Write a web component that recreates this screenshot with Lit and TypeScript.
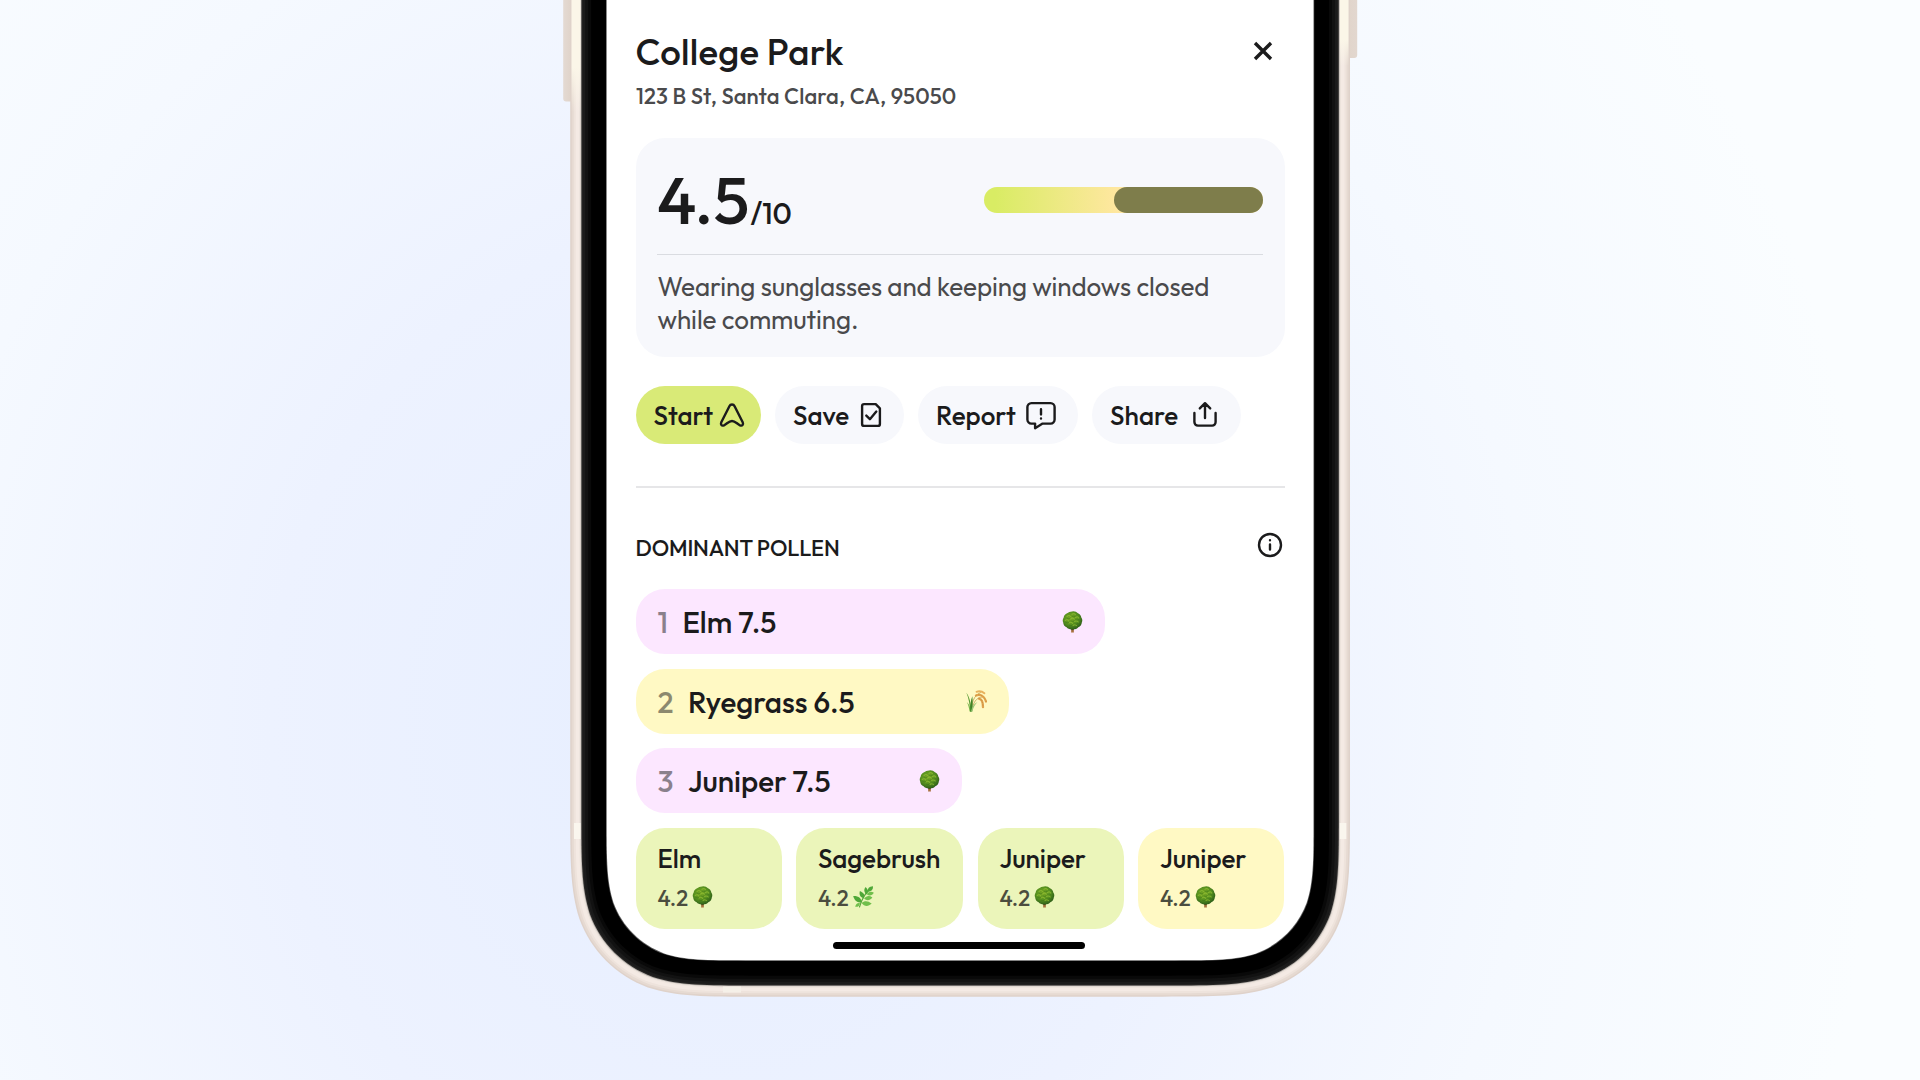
import { customElement, property } from 'lit/decorators.js';
import { css, html, LitElement, svg } from 'lit';

interface PollenItem {
  name: string;
  value: string;
  kind: 'tree' | 'grass' | 'herb';
  tone: 'pink' | 'yellow' | 'green';
  width: number;
}

const RANKED: PollenItem[] = [
  { name: 'Elm', value: '7.5', kind: 'tree', tone: 'pink', width: 469 },
  { name: 'Ryegrass', value: '6.5', kind: 'grass', tone: 'yellow', width: 373.3 },
  { name: 'Juniper', value: '7.5', kind: 'tree', tone: 'pink', width: 326.3 },
];

const OTHERS: PollenItem[] = [
  { name: 'Elm', value: '4.2', kind: 'tree', tone: 'green', width: 146 },
  { name: 'Sagebrush', value: '4.2', kind: 'herb', tone: 'green', width: 167 },
  { name: 'Juniper', value: '4.2', kind: 'tree', tone: 'green', width: 146 },
  { name: 'Juniper', value: '4.2', kind: 'tree', tone: 'yellow', width: 146 },
];

const ACTIONS = ['Start', 'Save', 'Report', 'Share'];

// Shells of the phone body from the outside in: [inset, colour]
const SHELLS: [number, string][] = [
  [0, '#dfd2ca'],
  [1.5, '#e6dad2'],
  [3.5, '#eee3dc'],
  [5.5, '#f4eae4'],
  [9, '#ece3dc'],
  [10.4, '#b9b3ae'],
  [11.2, '#262524'],
  [12.5, '#1b1b1b'],
  [15, '#121212'],
  [18, '#090909'],
  [21, '#000000'],
  [35.8, '#5a5a5a'],
  [36.5, '#ffffff'],
];

function shellPath(inset: number): string {
  const l = 570.2 + inset;
  const r = 1350 - inset;
  const b = 996.7 - inset;
  const q = 123 - inset * 0.88;
  // continuous corner, as fractions of the radius
  return `M${l} -10V${b - 1.528 * q}
    C${l} ${b - 1.088 * q} ${l} ${b - 0.868 * q} ${l + 0.075 * q} ${b - 0.631 * q}
    C${l + 0.169 * q} ${b - 0.373 * q} ${l + 0.373 * q} ${b - 0.169 * q} ${l + 0.631 * q} ${b - 0.075 * q}
    C${l + 0.868 * q} ${b} ${l + 1.088 * q} ${b} ${l + 1.528 * q} ${b}
    H${r - 1.528 * q}
    C${r - 1.088 * q} ${b} ${r - 0.868 * q} ${b} ${r - 0.631 * q} ${b - 0.075 * q}
    C${r - 0.373 * q} ${b - 0.169 * q} ${r - 0.169 * q} ${b - 0.373 * q} ${r - 0.075 * q} ${b - 0.631 * q}
    C${r} ${b - 0.868 * q} ${r} ${b - 1.088 * q} ${r} ${b - 1.528 * q}
    V-10Z`;
}

@customElement('pollen-glyph')
export class PollenGlyph extends LitElement {
  static styles = css`
    :host {
      display: flex;
    }
    svg {
      width: 21px;
      height: 22px;
    }
  `;

  @property() kind = 'tree';

  renderTree() {
    return svg`
      <defs>
        <radialGradient id="leafs" cx="0.42" cy="0.38" r="0.62">
          <stop offset="0" stop-color="#78a824" />
          <stop offset="0.6" stop-color="#56901f" />
          <stop offset="1" stop-color="#2f6119" />
        </radialGradient>
      </defs>
      <path d="M9.3 17h2.4l.2 4.6H9.1z" fill="#a8733f" />
      <path d="M9.3 17h2.4v2.2H9.3z" fill="#5a4420" />
      <path
        d="M10.5.4c2.4-.2 4.2.8 5.4 1.900 2 .8 3.200 2.400 3.400 4.300 1.200 1.500 1.300 3.500.5 5-.1 2.300-1.500 3.900-3.500 4.600-1.200 1.600-3.400 2.300-5.800 2.200-2.600.2-4.700-.5-5.900-2.100-2-.7-3.300-2.400-3.400-4.700-.8-1.700-.5-3.600.5-5.100.2-1.900 1.500-3.400 3.400-4.200C6.300 1.100 8.300.3 10.500.4z"
        fill="url(#leafs)"
      />
      <path
        d="M5 5.500q2-2 3.500 0M10 3.300q2-1.500 3.500.4M13.500 6.500q2-1.500 3.400.6M8.500 8q2-1.800 3.800.1M3.200 9.500q1.800-1.700 3.500.3M12.500 10.500q2-1.500 3.800.5M7 12q2-1.700 3.500.3M11 14.500q2-1.500 3.600.2"
        fill="none" stroke="#93bf35" stroke-width="1.1" stroke-linecap="round" opacity="0.7"
      />
      <path
        d="M5.200 7.400q1.800 1 3.200-.2M10.300 5.500q1.500.8 3-.1M9 10q1.500 1 3.200 0M13.500 8.900q1.500.7 3-.1M3.800 11.600q1.500.9 3-.1M7.400 14.400q1.500.8 3-.2M12.800 12.900q1.500.6 3-.2"
        fill="none" stroke="#2f6315" stroke-width="0.7" stroke-linecap="round" opacity="0.5"
      />`;
  }

  renderGrass() {
    return svg`
      <g fill="none" stroke-linecap="round">
        <path d="M5 21C5.500 14 7.500 5 14.500 2.600" stroke="#b7a24c" stroke-width="0.8" />
        <path d="M6 20C7 13 10 7.500 16 7" stroke="#c2a558" stroke-width="0.8" />
        <path d="M10.500 1.800C13 .9 16 1.200 18.400 3.300" stroke="#e8b25e" stroke-width="1.8" />
        <path d="M10 5.500C14 3.500 18.500 6 20 11.500" stroke="#e2a64f" stroke-width="2.3" />
        <path d="M13 8.600C15.500 9 17 12 17 17.200" stroke="#dfa24e" stroke-width="2.3" />
        <path d="M10 5.500C14 3.500 18.500 6 20 11.500M13 8.600C15.500 9 17 12 17 17.200" stroke="#c98a3a" stroke-width="0.8" stroke-dasharray="0.6 2" />
      </g>
      <path d="M4.200 21.400C3.800 14 2.500 8 .4 2.800 3.300 7 5 12 5.600 21.400z" fill="#5c9d37" />
      <path d="M3.600 21.400C3 17.500 2.200 14.500.8 12 3 14 4.500 17 5 21.400z" fill="#78b54b" />
      <path d="M4.200 21.400C4.200 15 4.800 10 6.300 6.200 6.900 11 6.700 17 6.200 21.400z" fill="#3f8428" />
      <path d="M5 21.400C6 17 8 13.500 11.500 12 9 14.500 7.300 17.500 6.400 21.400z" fill="#9cc979" />`;
  }

  renderHerb() {
    return svg`
      <path d="M6.500 21C8 15.500 11.500 8 17.200 2.500" fill="none" stroke="#5aa53c" stroke-width="1.1" stroke-linecap="round" />
      <g fill="#4fa838">
        <path d="M20 .3C16 .4 14.400 2.600 14.700 6 18.500 5.500 20.300 3.600 20 .3z" />
        <path d="M13.700 8.600C10.800 6 10.600 3.700 12.600 1 15.400 3.500 15.800 6 13.700 8.600z" />
        <path d="M10.800 12.400C7 10.800 5.900 8.600 6.900 4.900 10.900 6.600 12.200 8.900 10.800 12.400z" />
        <path d="M8.700 16.600C4 16.400 1.200 14.200.2 9.900 5.600 9.700 8.700 12.200 8.700 16.600z" />
      </g>
      <g fill="#70bf4b">
        <path d="M13.800 8.300C15.900 5.500 18.200 5.200 20.900 6.800 18.900 9.900 16.400 10.300 13.800 8.300z" />
        <path d="M11.100 12.500C13.500 9.500 16.300 9.200 19.400 11.400 16.800 14.700 13.900 15.100 11.100 12.500z" />
        <path d="M8.600 17.100C11.400 14.300 15 14.500 18.700 17.600 15 21.200 11.400 20.700 8.600 17.100z" />
        <path d="M6.900 17.200C4.300 16.700 2.800 18.100 2.200 20.800 5 21.100 6.700 19.900 6.900 17.200z" />
      </g>`;
  }

  render() {
    return html`<svg viewBox="0 0 21 22">
      ${this.kind === 'tree' ? this.renderTree() : this.kind === 'grass' ? this.renderGrass() : this.renderHerb()}
    </svg>`;
  }
}

@customElement('app-root')
export class AppRoot extends LitElement {
  static styles = css`
    :host {
      display: grid;
      width: 1920px;
      height: 1080px;
      overflow: hidden;
      background: radial-gradient(ellipse 1150px 1250px at 730px 720px, #e6eeff 0%, #edf2ff 40%, #f5f9ff 70%, #fafdff 100%);
      font-family: 'Outfit', 'Lato', sans-serif;
      font-weight: 500;
      color: #1b1b1c;
    }

    .device,
    .screen {
      grid-area: 1 / 1;
    }

    .device {
      width: 1920px;
      height: 1080px;
    }

    .screen {
      box-sizing: border-box;
      display: flex;
      flex-direction: column;
      width: 649px;
      height: 960px;
      margin-left: 635.6px;
      padding-top: 28px;
    }

    .line {
      fill: none;
      stroke: #1b1b1c;
      stroke-width: 2.4;
      stroke-linecap: round;
      stroke-linejoin: round;
    }

    .header {
      display: flex;
      justify-content: space-between;
      align-items: flex-start;
    }

    .title {
      padding-top: 1px;
      font-size: 36.5px;
      line-height: 45px;
      letter-spacing: 0.26px;
    }

    .close {
      width: 20px;
      height: 20px;
      margin: 13px 12px 0 0;
    }

    .close path {
      stroke-width: 3.4;
      stroke-linecap: butt;
    }

    .address {
      margin-top: 7.5px;
      padding-left: 0.4px;
      font-size: 22px;
      line-height: 28px;
      letter-spacing: 0.11px;
      color: #4a4a4c;
    }

    .card {
      box-sizing: border-box;
      height: 219px;
      margin-top: 28.5px;
      padding: 8px 21.5px 0;
      border-radius: 29px;
      background: #f7f8fc;
    }

    .score-row {
      display: flex;
      align-items: center;
      justify-content: space-between;
      height: 108px;
      border-bottom: 1.5px solid #dadce1;
    }

    .score {
      padding-top: 14px;
      font-size: 66px;
      line-height: 82px;
    }

    .score small {
      margin-left: 1px;
      font-size: 29.4px;
    }

    .meter {
      display: flex;
      justify-content: flex-end;
      width: 279.5px;
      height: 25.5px;
      border-radius: 13px;
      background: linear-gradient(90deg, #d9ec64 4%, #ffe7a0 48%);
    }

    .meter-rest {
      border-radius: 13px;
      background: #7e7d4b;
    }

    .advice {
      margin-top: 14.5px;
      padding-left: 0.4px;
      font-size: 26px;
      font-weight: 400;
      line-height: 33px;
      letter-spacing: -0.06px;
      color: #4a4a4c;
    }

    .actions {
      display: flex;
      gap: 14.5px;
      margin-top: 29px;
    }

    .action {
      box-sizing: border-box;
      display: flex;
      align-items: center;
      height: 58px;
      padding-left: 18px;
      border-radius: 29px;
      background: #f7f8fc;
      font-size: 26px;
      line-height: 33px;
    }

    .action svg {
      flex: none;
      width: 36px;
      height: 36px;
      margin-left: -0.4px;
    }

    .action.start {
      gap: 1px;
      width: 125px;
      background: #d9ea77;
    }

    .action.save {
      gap: 4px;
      width: 128.5px;
    }

    .action.report {
      gap: 8px;
      width: 159.5px;
    }

    .action.share {
      gap: 9px;
      width: 148.5px;
    }

    .divider {
      height: 2px;
      margin-top: 41.5px;
      background: #e6e6e8;
    }

    .section-head {
      display: flex;
      justify-content: space-between;
      align-items: flex-start;
      box-sizing: border-box;
      height: 101.5px;
      padding-top: 43.5px;
    }

    .section-title {
      padding-top: 1px;
      font-size: 22px;
      line-height: 33px;
      letter-spacing: -0.16px;
    }

    .info {
      width: 28px;
      height: 28px;
      margin-right: 0.7px;
    }

    .ranking {
      display: flex;
      flex-direction: column;
      gap: 14.7px;
    }

    .bar {
      box-sizing: border-box;
      display: flex;
      align-items: center;
      height: 65px;
      padding: 0 22px 0 21.8px;
      border-radius: 29px;
      font-size: 29.6px;
      line-height: 38px;
    }

    .bar span {
      padding-top: 1px;
    }

    .rank {
      margin-right: 14.5px;
      opacity: 0.5;
    }

    .bar pollen-glyph {
      margin-left: auto;
    }

    .pink {
      background: #fce7ff;
    }

    .yellow {
      background: #fff9c4;
    }

    .green {
      background: #ebf5ba;
    }

    .tiles {
      display: flex;
      gap: 14.5px;
      margin-top: 14.6px;
    }

    .tile {
      box-sizing: border-box;
      height: 101px;
      padding: 14.1px 0 0 21.8px;
      border-radius: 29px;
    }

    .tile-name {
      font-size: 26px;
      line-height: 33px;
      letter-spacing: -0.05px;
    }

    .tile-value {
      display: flex;
      gap: 4.3px;
      margin-top: 9px;
      font-size: 22px;
      line-height: 28px;
      color: #4b4d3f;
    }

    .tile-value pollen-glyph {
      margin-top: 1.5px;
    }

    .home {
      width: 252px;
      height: 7.5px;
      margin: 13px 0 0 197.3px;
      border-radius: 4px;
      background: #000;
    }
  `;

  renderDevice() {
    return html`<svg class="device" viewBox="0 0 1920 1080">
      <defs>
        <linearGradient id="key-left">
          <stop offset="0" stop-color="#e4dad3" />
          <stop offset="0.75" stop-color="#dfd2c8" />
          <stop offset="1" stop-color="#cdbcab" />
        </linearGradient>
        <linearGradient id="key-right">
          <stop offset="0" stop-color="#dccdbe" />
          <stop offset="0.3" stop-color="#e1d5cb" />
          <stop offset="1" stop-color="#e2d7cf" />
        </linearGradient>
        <linearGradient id="cream" x1="0" y1="0" x2="0" y2="1">
          <stop offset="0.6" stop-color="#fbf6e8" />
          <stop offset="1" stop-color="#fbf6e8" stop-opacity="0" />
        </linearGradient>
      </defs>
      <rect x="563.2" y="-10" width="12" height="111.5" rx="3" fill="url(#key-left)" />
      <rect x="1345" y="-10" width="12.2" height="68" rx="3" fill="url(#key-right)" />
      ${SHELLS.map(([inset, fill]) => svg`<path d=${shellPath(inset)} fill=${fill} />`)}
      <rect x="571.5" y="0" width="9" height="112" fill="url(#cream)" />
      <rect x="1340" y="0" width="8.5" height="66" fill="url(#cream)" />
      <rect x="574" y="823" width="6.5" height="16" fill="#faf6ee" />
      <rect x="1339.8" y="823" width="6.5" height="16" fill="#faf6ee" />
      <rect x="723" y="986.5" width="18" height="6" fill="#f5f0e8" />
    </svg>`;
  }

  renderActionIcon(name: string) {
    switch (name) {
      case 'Start':
        return svg`<path class="line" d="M15.400 9.200 7.300 25.300C6.300 27.700 7.700 29.300 10 28.300 13 26.900 14.800 24 18 24s5 2.900 8 4.300c2.300 1 3.700-.6 2.700-3L20.600 9.200C19.500 6.900 16.500 6.900 15.400 9.200z" />`;
      case 'Save':
        return svg`<path class="line" d="M11.100 7.100h11.600l4.200 4.200v15.600a2 2 0 0 1-2 2H11.100a2 2 0 0 1-2-2V9.100a2 2 0 0 1 2-2zM13.300 18.600l3.600 3.600 6.400-7.600" />`;
      case 'Report':
        return svg`<path class="line" d="M8.400 6.100h19.200a4 4 0 0 1 4 4v12.500a4 4 0 0 1-4 4H19.600l-7.500 4.600v-4.600H8.400a4 4 0 0 1-4-4V10.100a4 4 0 0 1 4-4z" />
          <path class="line" d="M18 12.200v5.200M18 21.500v.1" />`;
      default:
        return svg`<path class="line" d="M18 21V6.600M12.800 11.400 18 6.200l5.200 5.200M7.400 16v9.100a3.500 3.500 0 0 0 3.500 3.500h14.200a3.500 3.500 0 0 0 3.500-3.500V16" />`;
    }
  }

  renderBar(item: PollenItem, index: number) {
    return html`
      <div class="bar ${item.tone}" style="width: ${item.width}px">
        <span class="rank">${index + 1}</span>
        <span>${item.name} ${item.value}</span>
        <pollen-glyph kind=${item.kind}></pollen-glyph>
      </div>
    `;
  }

  renderTile(item: PollenItem) {
    return html`
      <div class="tile ${item.tone}" style="width: ${item.width}px">
        <div class="tile-name">${item.name}</div>
        <div class="tile-value">
          <span>${item.value}</span>
          <pollen-glyph kind=${item.kind}></pollen-glyph>
        </div>
      </div>
    `;
  }

  render() {
    return html`
      ${this.renderDevice()}
      <div class="screen">
        <div class="header">
          <div class="title">College Park</div>
          <svg class="close" viewBox="0 0 20 20"><path class="line" d="M2 2 18 18M18 2 2 18" /></svg>
        </div>
        <div class="address">123 B St, Santa Clara, CA, 95050</div>

        <div class="card">
          <div class="score-row">
            <div class="score">4.5<small>/10</small></div>
            <div class="meter"><div class="meter-rest" style="width: 149px"></div></div>
          </div>
          <div class="advice">Wearing sunglasses and keeping windows closed<br />while commuting.</div>
        </div>

        <div class="actions">
          ${ACTIONS.map(
            (name) => html`
              <div class="action ${name.toLowerCase()}">
                <span>${name}</span>
                <svg viewBox="0 0 36 36">${this.renderActionIcon(name)}</svg>
              </div>
            `
          )}
        </div>

        <div class="divider"></div>

        <div class="section-head">
          <div class="section-title">DOMINANT POLLEN</div>
          <svg class="info" viewBox="0 0 28 28">
            <circle class="line" cx="14" cy="14" r="11" />
            <path class="line" d="M14 13.5v5M14 9.2v.1" />
          </svg>
        </div>

        <div class="ranking">${RANKED.map((item, index) => this.renderBar(item, index))}</div>
        <div class="tiles">${OTHERS.map((item) => this.renderTile(item))}</div>
        <div class="home"></div>
      </div>
    `;
  }
}
